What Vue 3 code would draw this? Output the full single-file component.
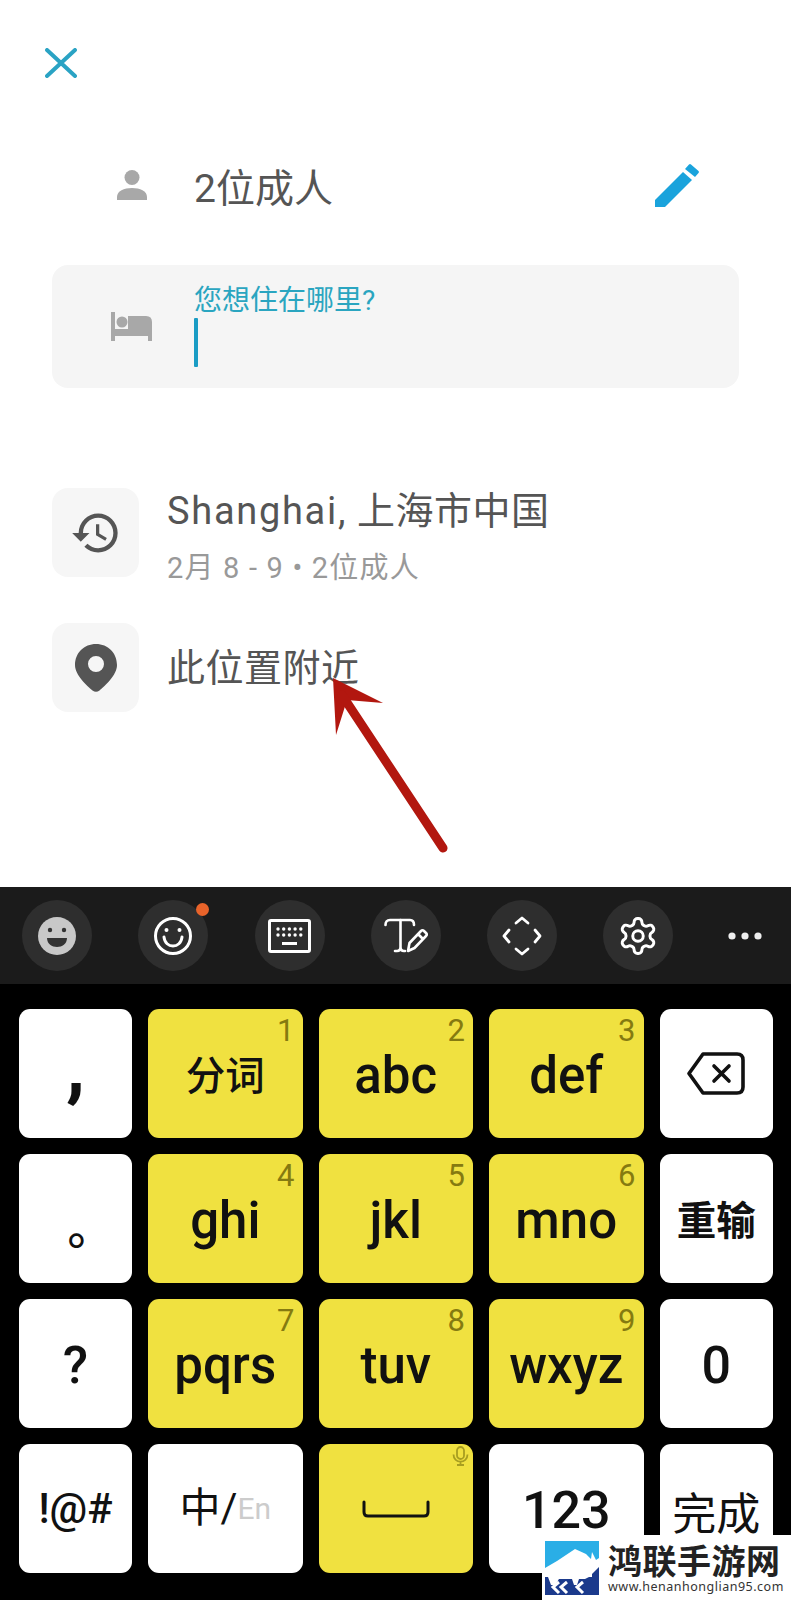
<template>
  <div class="page">
    <section class="top">
      <svg class="close" width="32" height="30" viewBox="0 0 32 30">
        <path d="M2 2 L30 28 M30 2 L2 28" stroke="#2aa3c4" stroke-width="4" stroke-linecap="round" fill="none" />
      </svg>

      <div class="guests">
        <svg width="30" height="30" viewBox="0 0 30 30" fill="#a8a8a8">
          <circle cx="15" cy="7.5" r="7.5" />
          <path d="M0 30 V27 C0 21 7 18 15 18 C23 18 30 21 30 27 V30 Z" />
        </svg>
        <span class="guests-text">2位成人</span>
        <svg class="pencil" width="46" height="44" viewBox="0 0 46 44" fill="#1aa3dc">
          <path d="M0 37 L28 9 L37 17 L10 44 H0 Z" />
          <path d="M30 6 L34 1.5 Q35 0.5 36 1.5 L43.5 8 Q44.5 9 43.5 10 L40 14 Z" />
        </svg>
      </div>

      <div class="search">
        <svg width="41" height="29" viewBox="0 0 41 29" fill="#a8a8a8">
          <path d="M0 0 H4 V17 H17 V4 H35 Q41 4 41 10 V29 H37 V24 H4 V29 H0 Z" />
          <circle cx="11" cy="10" r="5.5" />
        </svg>
        <div class="field">
          <span class="field-label">您想住在哪里?</span>
          <span class="caret"></span>
        </div>
      </div>

      <div class="recent">
        <div class="recent-row">
          <div class="icon-box">
            <svg width="52" height="52" viewBox="0 0 24 24" fill="#555">
              <path d="M13 3a9 9 0 0 0-9 9H1l3.89 3.89.07.14L9 12H6c0-3.87 3.13-7 7-7s7 3.13 7 7-3.13 7-7 7c-1.93 0-3.68-.79-4.94-2.06l-1.42 1.42A8.954 8.954 0 0 0 13 21a9 9 0 0 0 0-18zm-1 5v5l4.28 2.54.72-1.21-3.5-2.08V8H12z" />
            </svg>
          </div>
          <div class="recent-text with-sub">
            <span class="recent-title"><span class="latin">Shanghai,</span> 上海市中国</span>
            <span class="recent-sub">2月 8 - 9 • 2位成人</span>
          </div>
        </div>
        <div class="recent-row">
          <div class="icon-box">
            <svg width="42" height="48" viewBox="0 0 42 48" fill="#555" fill-rule="evenodd">
              <path d="M21 0 C33 0 42 9 42 21 C42 31 30 42 24.5 46.5 Q21 49 17.5 46.5 C12 42 0 31 0 21 C0 9 9 0 21 0 Z M21 12 A8 8 0 1 0 21 28 A8 8 0 1 0 21 12 Z" />
            </svg>
          </div>
          <div class="recent-text">
            <span class="recent-title">此位置附近</span>
          </div>
        </div>
      </div>
    </section>

    <section class="keyboard">
      <div class="toolbar">
        <div class="tool">
          <svg width="40" height="40" viewBox="0 0 40 40">
            <circle cx="20" cy="20" r="19" fill="#c8c8c8" />
            <circle cx="13" cy="14" r="2.2" fill="#333" />
            <circle cx="27" cy="14" r="2.2" fill="#333" />
            <path d="M10 22 H30 C30 28 25 31 20 31 C15 31 10 28 10 22 Z" fill="#333" />
          </svg>
        </div>
        <div class="tool">
          <svg width="40" height="40" viewBox="0 0 40 40" fill="none" stroke="#fff" stroke-width="3">
            <circle cx="20" cy="20" r="17.5" />
            <circle cx="13.5" cy="14" r="2" fill="#fff" stroke="none" />
            <circle cx="26.5" cy="14" r="2" fill="#fff" stroke="none" />
            <path d="M11 21 C12 33 28 33 29 21" stroke-linecap="round" />
          </svg>
          <span class="notify"></span>
        </div>
        <div class="tool">
          <svg width="43" height="34" viewBox="0 0 43 34" fill="#fff">
            <rect x="1.5" y="1.5" width="40" height="31" rx="1.5" fill="none" stroke="#fff" stroke-width="3" />
            <g>
              <circle v-for="n in 10" :key="n" :cx="10 + ((n - 1) % 5) * 5.7" :cy="n <= 5 ? 10 : 16" r="1.7" />
            </g>
            <rect x="14" y="23" width="15" height="3" />
          </svg>
        </div>
        <div class="tool">
          <svg width="44" height="35" viewBox="0 0 44 35" fill="none" stroke="#fff" stroke-width="2.6" stroke-linecap="round" stroke-linejoin="round">
            <path d="M1.5 7 Q1.5 2 6 2 H26 Q30 2 30 7" />
            <path d="M16.5 2 V29 Q16.5 33 13 33 H11 M16.5 29 Q16.5 33 20 33 H21" />
            <path d="M24 33 L25.5 25 L37 13 Q38.5 11.5 40 13 L42 15 Q43.5 16.5 42 18 L30.5 30 Z M34 16 L39 21" />
          </svg>
        </div>
        <div class="tool">
          <svg width="40" height="40" viewBox="0 0 40 40" fill="none" stroke="#fff" stroke-width="2.8" stroke-linecap="round" stroke-linejoin="round">
            <path d="M14 7 L20 2 L26 7" />
            <path d="M14 33 L20 38 L26 33" />
            <path d="M7 14 L2 20 L7 26" />
            <path d="M33 14 L38 20 L33 26" />
          </svg>
        </div>
        <div class="tool">
          <svg width="42" height="42" viewBox="0 0 24 24" fill="none" stroke="#fff" stroke-width="1.7" stroke-linejoin="round">
            <path d="M12.22 2h-.44a2 2 0 0 0-2 2v.18a2 2 0 0 1-1 1.73l-.43.25a2 2 0 0 1-2 0l-.15-.08a2 2 0 0 0-2.73.73l-.22.38a2 2 0 0 0 .73 2.73l.15.1a2 2 0 0 1 1 1.72v.51a2 2 0 0 1-1 1.74l-.15.09a2 2 0 0 0-.73 2.73l.22.38a2 2 0 0 0 2.73.73l.15-.08a2 2 0 0 1 2 0l.43.25a2 2 0 0 1 1 1.73V20a2 2 0 0 0 2 2h.44a2 2 0 0 0 2-2v-.18a2 2 0 0 1 1-1.73l.43-.25a2 2 0 0 1 2 0l.15.08a2 2 0 0 0 2.73-.73l.22-.39a2 2 0 0 0-.73-2.73l-.15-.08a2 2 0 0 1-1-1.74v-.5a2 2 0 0 1 1-1.74l.15-.09a2 2 0 0 0 .73-2.73l-.22-.38a2 2 0 0 0-2.73-.73l-.15.08a2 2 0 0 1-2 0l-.43-.25a2 2 0 0 1-1-1.73V4a2 2 0 0 0-2-2z" />
            <circle cx="12" cy="12" r="3" />
          </svg>
        </div>
        <svg class="more" width="34" height="8" viewBox="0 0 34 8" fill="#eee">
          <circle cx="4" cy="4" r="3.6" />
          <circle cx="17" cy="4" r="3.6" />
          <circle cx="30" cy="4" r="3.6" />
        </svg>
      </div>

      <div class="keys">
        <div v-for="key in keys" :key="key.id" class="key" :class="[key.yellow ? 'yellow' : '', key.cls]">
          <span v-if="key.num" class="num">{{ key.num }}</span>
          <span v-if="key.text" class="label">{{ key.text }}</span>

          <svg v-if="key.id === 'back'" width="58" height="43" viewBox="0 0 58 43" fill="none" stroke="#111" stroke-width="3.6" stroke-linejoin="round" stroke-linecap="round">
            <path d="M16 2 H50 Q56 2 56 8 V35 Q56 41 50 41 H16 L2 21.5 Z" />
            <path d="M27 14 L42 29 M42 14 L27 29" />
          </svg>

          <template v-if="key.id === 'lang'">
            <span class="lang-zh">中/</span><span class="lang-en">En</span>
          </template>

          <template v-if="key.id === 'space'">
            <svg class="mic" width="17" height="20" viewBox="0 0 17 20" fill="none" stroke="#a89e20" stroke-width="1.8">
              <rect x="5" y="1" width="7" height="12" rx="3.5" />
              <path d="M1.5 8.5 C1.5 18 15.5 18 15.5 8.5 M8.5 15.5 V19 M5 19 H12" />
            </svg>
            <svg width="68" height="18" viewBox="0 0 68 18" fill="none" stroke="#111" stroke-width="3" stroke-linecap="round">
              <path d="M2 2 V12 Q2 16 6 16 H62 Q66 16 66 12 V2" />
            </svg>
          </template>
        </div>
      </div>
    </section>

    <!-- annotation drawn over the screenshot -->
    <svg class="arrow" width="130" height="185" viewBox="0 0 130 185">
      <path d="M13 8 L63 33 L27 30 L16 65 Z" fill="#b2170f" />
      <path d="M22 25 L123 178" stroke="#b2170f" stroke-width="9" stroke-linecap="round" />
    </svg>

    <div class="watermark">
      <svg class="mark-logo" width="54" height="54" viewBox="0 0 54 54">
        <rect width="54" height="54" fill="#2aaee6" />
        <path d="M0 27 L12 20 L30 8 L41 13 L46 18 L47 11 L51 19 L54 17 V54 H0 Z" fill="#fff" />
        <rect y="36" width="47" height="18" fill="#1b3a8c" />
        <path d="M47 33 L54 26 V54 H47 Z" fill="#1b3a8c" />
        <path d="M3 36 H14 L10 42 L14 36 H30 L38 36 L44 32 L47 28 V36 H44 L40 38 H34 L32 44 H29 L27 38 H14 L10 44 H6 Z" fill="#fff" />
        <path d="M14 41 L8 46 L14 52 M22 41 L16 46 L22 52 M38 41 L32 46 L38 52" fill="none" stroke="#fff" stroke-width="3" />
      </svg>
      <div class="mark-text">
        <span class="mark-title">鸿联手游网</span>
        <span class="mark-url">www.henanhonglian95.com</span>
      </div>
    </div>
  </div>
</template>

<script setup>
const keys = [
  { id: 'comma', text: ',', cls: 'key-comma' },
  { id: 'k1', text: '分词', num: '1', yellow: true, cls: 'key-cjk' },
  { id: 'k2', text: 'abc', num: '2', yellow: true },
  { id: 'k3', text: 'def', num: '3', yellow: true },
  { id: 'back' },
  { id: 'dot', text: '。', cls: 'key-dot' },
  { id: 'k4', text: 'ghi', num: '4', yellow: true },
  { id: 'k5', text: 'jkl', num: '5', yellow: true },
  { id: 'k6', text: 'mno', num: '6', yellow: true },
  { id: 'reset', text: '重输', cls: 'key-cjk key-bold' },
  { id: 'ask', text: '?', cls: 'key-big' },
  { id: 'k7', text: 'pqrs', num: '7', yellow: true },
  { id: 'k8', text: 'tuv', num: '8', yellow: true },
  { id: 'k9', text: 'wxyz', num: '9', yellow: true },
  { id: 'zero', text: '0', cls: 'key-big' },
  { id: 'sym', text: '!@#', cls: 'key-sym' },
  { id: 'lang' },
  { id: 'space', yellow: true },
  { id: 'num', text: '123', cls: 'key-big' },
  { id: 'done', text: '完成', cls: 'key-done' },
]
</script>

<style>
body {
  background: #fff;
}
</style>

<style scoped>
.page {
  position: relative;
  width: 791px;
  height: 1600px;
  overflow: hidden;
  background: #fff;
  font-family: Roboto, "Noto Sans CJK SC", sans-serif;
}

.top {
  height: 887px;
  padding-top: 48px;
  box-sizing: border-box;
}

.close {
  display: block;
  margin-left: 45px;
}

.guests {
  display: flex;
  align-items: center;
  height: 44px;
  margin-top: 85px;
  padding: 0 90px 0 117px;
}

.guests-text {
  margin-left: 47px;
  padding-top: 8px;
  font-size: 39px;
  line-height: 44px;
  color: #555;
}

.pencil {
  margin-left: auto;
}

.search {
  display: flex;
  align-items: center;
  height: 123px;
  margin: 58px 52px 0;
  padding-left: 59px;
  background: #f5f5f5;
  border-radius: 16px;
}

.field {
  display: flex;
  flex-direction: column;
  margin-left: 42px;
}

.field-label {
  font-size: 28px;
  line-height: 30px;
  color: #2aa5c0;
}

.caret {
  width: 4px;
  height: 49px;
  margin-top: 2px;
  background: #1a9cc4;
  border-radius: 1px;
}

.recent {
  display: flex;
  flex-direction: column;
  gap: 46px;
  margin: 100px 52px 0;
}

.recent-row {
  display: flex;
  align-items: center;
  gap: 28px;
  height: 89px;
}

.icon-box {
  display: flex;
  align-items: center;
  justify-content: center;
  width: 87px;
  height: 89px;
  background: #f6f6f6;
  border-radius: 16px;
}

.recent-text {
  display: flex;
  flex-direction: column;
}

.recent-text.with-sub {
  gap: 18px;
  padding-top: 8px;
}

.recent-title {
  font-size: 38px;
  line-height: 44px;
  letter-spacing: 0.5px;
  color: #555;
}

.latin {
  letter-spacing: 1.7px;
}

.recent-sub {
  font-size: 29px;
  line-height: 34px;
  letter-spacing: 1.2px;
  color: #999;
}

.keyboard {
  height: 713px;
  background: #000;
}

.toolbar {
  display: flex;
  align-items: center;
  gap: 46.3px;
  height: 97px;
  padding-left: 22px;
  background: #1b1b1b;
}

.tool {
  position: relative;
  display: flex;
  align-items: center;
  justify-content: center;
  flex: none;
  width: 70px;
  height: 71px;
  background: #2e2e2e;
  border-radius: 50%;
}

.notify {
  position: absolute;
  top: 3px;
  right: -1px;
  width: 13px;
  height: 13px;
  background: #e8632a;
  border-radius: 50%;
}

.more {
  margin-left: 8px;
}

.keys {
  display: grid;
  grid-template-columns: 113px 154.5px 154.5px 154.5px 113.5px;
  grid-auto-rows: 129px;
  gap: 16px;
  padding: 25px 0 0 19px;
}

.key {
  position: relative;
  display: flex;
  align-items: center;
  justify-content: center;
  background: #fff;
  border-radius: 11px;
  color: #111;
  font-size: 51px;
  font-weight: 500;
}

.key.yellow {
  background: #f0e140;
}

.num {
  position: absolute;
  top: 5px;
  right: 8px;
  font-size: 31px;
  line-height: 34px;
  font-weight: 400;
  color: #857a10;
}

.label {
  line-height: 1;
  padding-top: 4px;
}

.key-cjk {
  font-size: 39.5px;
}

.key-cjk .label {
  padding-top: 6px;
}

.key-bold {
  font-weight: 700;
}

.key-big {
  font-size: 52px;
}

.key-big .label {
  padding-top: 5px;
}

.key-sym {
  font-size: 42px;
}

.key-sym .label {
  padding-top: 0;
}

.key-done {
  align-items: flex-start;
  padding-top: 45px;
  box-sizing: border-box;
  font-size: 44px;
  font-weight: 400;
}

.key-comma .label {
  padding-top: 0;
  font-size: 78px;
  font-weight: 700;
  transform: translateY(-8px);
}

.key-dot .label {
  padding-top: 0;
  font-family: "Noto Sans CJK SC", sans-serif;
  font-size: 46px;
  transform: translate(15px, 5px);
}

.lang-zh {
  font-size: 41px;
  font-weight: 400;
  transform: translateY(-5px);
}

.lang-en {
  font-size: 30px;
  font-weight: 400;
  color: #ccc;
}

.mic {
  position: absolute;
  top: 2px;
  right: 4px;
}

.arrow {
  position: absolute;
  left: 320px;
  top: 670px;
}

.watermark {
  position: absolute;
  right: 0;
  bottom: 0;
  display: flex;
  gap: 9px;
  width: 249px;
  height: 65px;
  padding: 6px 0 0 3px;
  box-sizing: border-box;
  background: #fff;
}

.mark-logo {
  flex: none;
}

.mark-text {
  display: flex;
  flex-direction: column;
}

.mark-title {
  font-family: "Noto Sans CJK SC", sans-serif;
  font-size: 34px;
  line-height: 38px;
  font-weight: 700;
  letter-spacing: 0.5px;
  white-space: nowrap;
  color: #222;
}

.mark-url {
  font-family: "Noto Sans", sans-serif;
  font-size: 12.5px;
  line-height: 15px;
  letter-spacing: 0.5px;
  white-space: nowrap;
  color: #333;
}
</style>
